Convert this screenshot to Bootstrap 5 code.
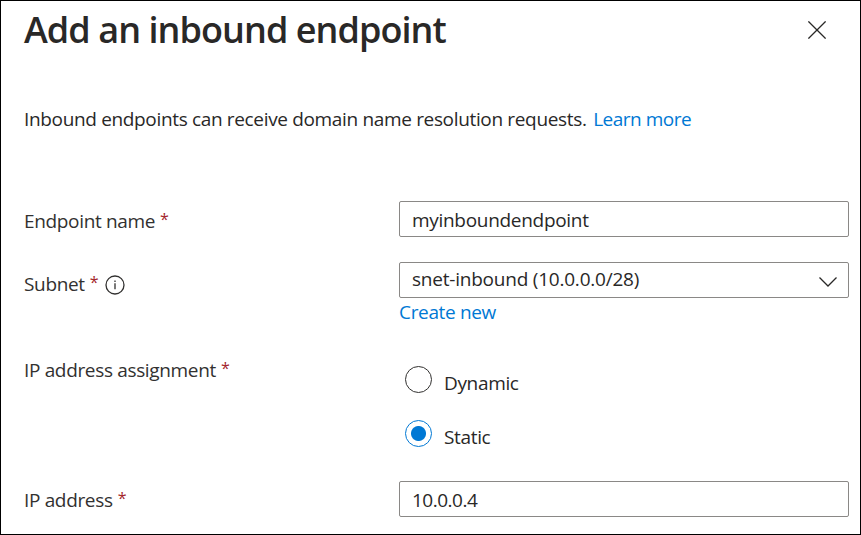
<!DOCTYPE html>
<html lang="en">
<head>
<meta charset="utf-8">
<meta name="viewport" content="width=device-width, initial-scale=1">
<title>Add an inbound endpoint</title>
<link href="https://cdn.jsdelivr.net/npm/bootstrap@5.3.0/dist/css/bootstrap.min.css" rel="stylesheet">
<style>
  body { font-family: "Open Sans", "Noto Sans", sans-serif; font-size: 19px; line-height: 26px; letter-spacing: -.34px; color: #292827; }
  .panel { height: 535px; border: 1px solid #000; padding: 0 11px 0 23px; }
  .panel-head { height: 105px; padding-top: 5px; }
  .panel-title { font-size: 36px; line-height: 48px; font-weight: 600; letter-spacing: -.94px; }
  .close-btn { width: 18px; height: 18px; margin: 15px 23px 0 0; }
  .panel a { color: #0078d4; }
  .intro { height: 95px; }
  .intro a { margin-left: 2px; letter-spacing: -.5px; }
  .label-col { width: 375px; color: #323130; }
  .req { color: #a4262c; margin-left: 5px; font-size: 16px; position: relative; top: -3px; }
  .panel .field { height: 36px; border: 1px solid #8a8886; border-radius: 2px; padding: 0 12px; font-size: 19px; letter-spacing: -.3px; color: #292827; line-height: 34px; }
  .panel input.field { padding-top: 2px; }
  .panel #ip { letter-spacing: -.5px; }
  .panel .field.picker { line-height: 32px; letter-spacing: -.22px; }
  .row-name { height: 61px; }
  .row-subnet { height: 95px; }
  .row-assign { height: 124px; }
  .row-name .label-col { padding-top: 7px; }
  .row-subnet .label-col { padding-top: 9px; }
  .row-ip .label-col { padding-top: 6px; }
  .info { width: 20px; height: 20px; margin: 4px 0 0 7px; }
  .under { padding-top: 1px; }
  .choices { padding-top: 9px; }
  .choice { height: 54px; padding-left: 6px; }
  .panel .choice .form-check-input { width: 27px; height: 27px; margin: 0 12px 0 0; border: 1px solid #323130; float: none; }
  .panel .choice .form-check-input:checked { background: #fff radial-gradient(circle, #0078d4 7px, transparent 8px); border-color: #0078d4; }
</style>
</head>
<body>
<main class="panel bg-white">
  <header class="panel-head d-flex justify-content-between align-items-start">
    <h1 class="panel-title m-0">Add an inbound endpoint</h1>
    <button type="button" class="close-btn btn p-0 border-0 d-flex" aria-label="Close">
      <svg width="18" height="18" viewBox="0 0 18 18" fill="none" stroke="#292827" stroke-width="1.3"><path d="M.4.4l17.2 17.2M17.6.4L.4 17.6"/></svg>
    </button>
  </header>
  <p class="intro mb-0">Inbound endpoints can receive domain name resolution requests. <a href="#" class="text-decoration-none">Learn more</a></p>
  <form>
    <div class="row-name d-flex">
      <label class="label-col flex-shrink-0" for="name">Endpoint name<span class="req">*</span></label>
      <input id="name" class="field form-control" value="myinboundendpoint">
    </div>
    <div class="row-subnet d-flex">
      <div class="label-col flex-shrink-0 d-flex align-items-start"><span>Subnet<span class="req">*</span></span>
        <svg class="info" viewBox="0 0 20 20" fill="none" stroke="#323130"><circle cx="10" cy="10" r="9" stroke-width="1.3"/><path d="M10 8.300v6M10 5.500v1.600" stroke-width="1.3"/></svg>
      </div>
      <div class="flex-grow-1">
        <div class="field picker d-flex justify-content-between pe-0" role="combobox"><span>snet-inbound (10.0.0.0/28)</span>
          <svg class="mt-2" width="29" height="22" viewBox="0 0 29 22" fill="none" stroke="#292827" stroke-width="1.3"><path d="M.5 6.500L9 15l8.500-8.500"/></svg>
        </div>
        <div class="under"><a href="#" class="text-decoration-none">Create new</a></div>
      </div>
    </div>
    <div class="row-assign d-flex">
      <div class="label-col flex-shrink-0">IP address assignment<span class="req">*</span></div>
      <div class="choices">
        <div class="choice d-flex"><input class="form-check-input" type="radio" name="assign" id="dyn"><label for="dyn" class="pt-1">Dynamic</label></div>
        <div class="choice d-flex"><input class="form-check-input" type="radio" name="assign" id="sta" checked><label for="sta" class="pt-1">Static</label></div>
      </div>
    </div>
    <div class="row-ip d-flex">
      <label class="label-col flex-shrink-0" for="ip">IP address<span class="req">*</span></label>
      <input id="ip" class="field form-control" value="10.0.0.4">
    </div>
  </form>
</main>
<script src="https://cdn.jsdelivr.net/npm/bootstrap@5.3.0/dist/js/bootstrap.bundle.min.js"></script>
</body>
</html>
